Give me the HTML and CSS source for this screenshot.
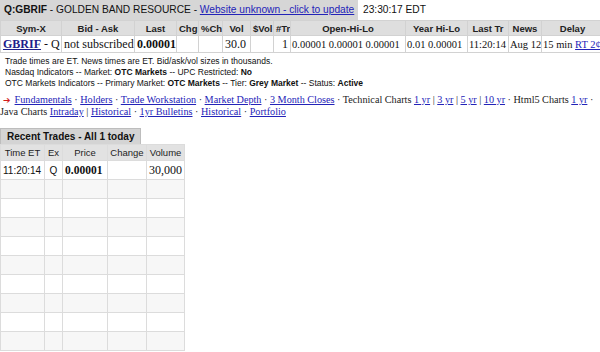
FILE: index.html
```html
<!DOCTYPE html>
<html lang="en">
<head>
    <meta charset="UTF-8">
    <meta name="viewport" content="width=device-width, initial-scale=1.0">
    <title>Q:GBRIF Quote</title>
    <link rel="stylesheet" href="styles.css">
</head>
<body>
    <div class="page">
        <div class="title-row">
            <div class="title"><b>Q:GBRIF</b> - GOLDEN BAND RESOURCE - <a href="#">Website unknown - click to update</a></div>
            <div class="clock">23:30:17 EDT</div>
        </div>
        <table class="quote">
            <colgroup>
                <col style="width:61px"><col style="width:73px"><col style="width:42px"><col style="width:22px">
                <col style="width:24px"><col style="width:28px"><col style="width:23px"><col style="width:17px">
                <col style="width:115px"><col style="width:62px"><col style="width:41px"><col style="width:33px">
                <col style="width:62px">
            </colgroup>
            <tr class="head">
                <th>Sym-X</th><th>Bid - Ask</th><th>Last</th><th>Chg</th><th>%Ch</th><th>Vol</th><th>$Vol</th><th>#Tr</th>
                <th>Open-Hi-Lo</th><th>Year Hi-Lo</th><th>Last Tr</th><th>News</th><th>Delay</th>
            </tr>
            <tr class="data">
                <td><a href="#" class="sym">GBRIF</a> - Q</td>
                <td>not subscribed</td>
                <td><b>0.00001</b></td>
                <td></td>
                <td></td>
                <td>30.0</td>
                <td></td>
                <td class="num">1</td>
                <td class="small">0.00001 0.00001 0.00001</td>
                <td class="small">0.01 0.00001</td>
                <td class="small">11:20:14</td>
                <td class="small">Aug 12</td>
                <td class="small">15 min <a href="#">RT 2&cent;</a></td>
            </tr>
        </table>

        <div class="notes">
            <div>Trade times are ET. News times are ET. Bid/ask/vol sizes in thousands.</div>
            <div>Nasdaq Indicators -- Market: <b>OTC Markets</b> -- UPC Restricted: <b>No</b></div>
            <div>OTC Markets Indicators -- Primary Market: <b>OTC Markets</b> -- Tier: <b>Grey Market</b> -- Status: <b>Active</b></div>
        </div>

        <div class="links">
            <div class="link-line"><span class="arrow">&#10132;</span> <a href="#">Fundamentals</a> &middot; <a href="#">Holders</a> &middot; <a href="#">Trade Workstation</a> &middot; <a href="#">Market Depth</a> &middot; <a href="#">3 Month Closes</a> &middot; Technical Charts <a href="#">1 yr</a> | <a href="#">3 yr</a> | <a href="#">5 yr</a> | <a href="#">10 yr</a> &middot; Html5 Charts <a href="#">1 yr</a> &middot;</div>
            <div class="link-line">Java Charts <a href="#">Intraday</a> | <a href="#">Historical</a> &middot; <a href="#">1yr Bulletins</a> &middot; <a href="#">Historical</a> &middot; <a href="#">Portfolio</a></div>
        </div>

        <div class="trades">
            <div class="tab">Recent Trades - All 1 today</div>
            <table class="trade-table">
                <colgroup>
                    <col style="width:44px"><col style="width:18px"><col style="width:45px"><col style="width:39px"><col style="width:38px">
                </colgroup>
                <tr class="head">
                    <th>Time ET</th><th>Ex</th><th>Price</th><th>Change</th><th>Volume</th>
                </tr>
                <tr>
                    <td class="sans">11:20:14</td><td class="sans ctr">Q</td><td><b>0.00001</b></td><td></td><td class="num">30,000</td>
                </tr>
                <tr><td></td><td></td><td></td><td></td><td></td></tr>
                <tr><td></td><td></td><td></td><td></td><td></td></tr>
                <tr><td></td><td></td><td></td><td></td><td></td></tr>
                <tr><td></td><td></td><td></td><td></td><td></td></tr>
                <tr><td></td><td></td><td></td><td></td><td></td></tr>
                <tr><td></td><td></td><td></td><td></td><td></td></tr>
                <tr><td></td><td></td><td></td><td></td><td></td></tr>
                <tr><td></td><td></td><td></td><td></td><td></td></tr>
                <tr><td></td><td></td><td></td><td></td><td></td></tr>
            </table>
        </div>
    </div>
</body>
</html>
```

FILE: styles.css
```css
body {
    margin: 0;
    padding: 0;
    background: #ffffff;
    color: #111;
    font-family: 'Liberation Serif', 'Times New Roman', serif;
}
.page {
    width: 600px;
    overflow: hidden;
}
a {
    color: #2323b8;
}
.title-row {
    display: flex;
    height: 20px;
    font-family: 'Liberation Sans', Arial, sans-serif;
    font-size: 10.2px;
    line-height: 20px;
}
.title {
    flex: 0 0 354px;
    padding-left: 4px;
    background: #d6d6d6;
    white-space: nowrap;
    overflow: hidden;
}
.clock {
    padding-left: 5px;
    white-space: nowrap;
}
.quote {
    table-layout: fixed;
    border-collapse: collapse;
    width: 603px;
}
.quote th, .quote td {
    border: 1px solid #d2d2d2;
    padding: 0 2px;
    white-space: nowrap;
    overflow: hidden;
}
.quote .head th {
    height: 14px;
    background: #dedede;
    font-family: 'Liberation Sans', Arial, sans-serif;
    font-size: 9.5px;
    font-weight: bold;
    color: #222;
    text-align: center;
}
.quote .data td {
    height: 16px;
    font-size: 12px;
}
.quote .sym {
    font-weight: bold;
    color: #1d1d8a;
}
.quote td.small {
    padding: 0 1px;
    font-size: 10.5px;
}
.num {
    text-align: right;
}
.notes {
    margin-top: 3px;
    padding-left: 5px;
    font-family: 'Liberation Sans', Arial, sans-serif;
    font-size: 8.5px;
    line-height: 11px;
    color: #111;
}
.links {
    margin-top: 5px;
    font-size: 10.2px;
    line-height: 12px;
    color: #222;
}
.link-line {
    white-space: nowrap;
}
.arrow {
    display: inline-block;
    margin-left: 3px;
    width: 9px;
    color: #d21a1a;
    font-family: 'DejaVu Sans', sans-serif;
    font-size: 9px;
}
.trades {
    margin-top: 8px;
}
.tab {
    display: inline-block;
    padding: 0 6px;
    height: 15px;
    line-height: 15px;
    background: #d4d4d4;
    border: 1px solid #bdbdbd;
    border-bottom: none;
    font-family: 'Liberation Sans', Arial, sans-serif;
    font-size: 10px;
    font-weight: bold;
    color: #111;
}
.trade-table {
    table-layout: fixed;
    border-collapse: collapse;
    width: 185px;
    border-right: 1px solid #b8b8b8;
    border-bottom: 1px solid #b8b8b8;
}
.trade-table th, .trade-table td {
    border: 1px solid #dcdcdc;
    padding: 0 2px;
    white-space: nowrap;
    height: 18px;
    font-size: 11.5px;
}
.trade-table td.num {
    font-size: 12px;
}
.trade-table .head th {
    height: 15px;
    background: #e2e2e2;
    font-family: 'Liberation Sans', Arial, sans-serif;
    font-size: 9.5px;
    font-weight: normal;
    color: #222;
    text-align: center;
}
.trade-table tr:nth-child(odd) td {
    background: #f7f7f7;
}
.trade-table tr:nth-child(2) td {
    background: #ffffff;
}
.trade-table td.sans {
    font-family: 'Liberation Sans', Arial, sans-serif;
    font-size: 10px;
}
.ctr {
    text-align: center;
}
```
